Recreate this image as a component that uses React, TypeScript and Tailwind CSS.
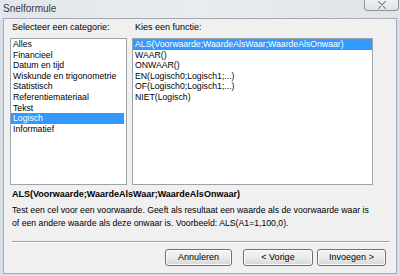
// Snelformule dialog (Windows 7 style "insert function" picker)

const categories = [
  "Alles",
  "Financieel",
  "Datum en tijd",
  "Wiskunde en trigonometrie",
  "Statistisch",
  "Referentiemateriaal",
  "Tekst",
  "Logisch",
  "Informatief",
];

const functions = [
  "ALS(Voorwaarde;WaardeAlsWaar;WaardeAlsOnwaar)",
  "WAAR()",
  "ONWAAR()",
  "EN(Logisch0;Logisch1;...)",
  "OF(Logisch0;Logisch1;...)",
  "NIET(Logisch)",
];

function ListBox({ items, selected, inset }: { items: string[]; selected: number; inset: string }) {
  return (
    <div className="h-[147px] border border-[#9da3aa] bg-white pt-0 overflow-hidden">
      {items.map((item, i) => (
        <div
          key={item}
          className={
            i === selected
              ? `h-[10.6px] leading-[10.6px] px-[2px] bg-[#3399ff] text-white whitespace-nowrap ${inset}`
              : "h-[10.6px] leading-[10.6px] px-[2px] text-black whitespace-nowrap"
          }
        >
          {item}
        </div>
      ))}
    </div>
  );
}

function Button({ label, width }: { label: string; width: string }) {
  return (
    <div
      className={`${width} h-[17px] flex items-center justify-center rounded-[3px] border border-[#707070] bg-gradient-to-b from-[#f4f4f4] via-[#ebebeb] to-[#d6d6d6] text-[9px] text-black shadow-[inset_0_0_0_1px_#fcfcfc]`}
    >
      {label}
    </div>
  );
}

export default function App() {
  return (
    <div className="w-[400px] h-[276px] overflow-hidden relative bg-[#d8dfe6] font-['Liberation_Sans',Arial,sans-serif]">
      {/* Aero glass title bar */}
      <div className="h-[18px] flex items-center pl-[3px] bg-gradient-to-r from-[#e2e6ea] via-[#e9ecef] to-[#dfe4e9]">
        <span className="text-[10px] text-[#3a3a3a] leading-none">Snelformule</span>
      </div>
      <div className="absolute top-0 right-[1px] w-[35px] h-[11px] rounded-b-[4px] border border-t-0 border-[#8b949d] bg-gradient-to-b from-[#eef1f4] to-[#dde2e7] flex items-center justify-center">
        <svg width="10" height="8" viewBox="0 0 10 8">
          <path d="M1.5 0.5 L8.5 7.5 M8.5 0.5 L1.5 7.5" stroke="#ffffff" strokeWidth="3" strokeLinecap="round" />
          <path d="M1.5 0.5 L8.5 7.5 M8.5 0.5 L1.5 7.5" stroke="#7d858d" strokeWidth="1.3" strokeLinecap="round" />
        </svg>
      </div>

      {/* Client area */}
      <div className="ml-[3px] w-[394px] h-[256px] border border-[#a3acb5] bg-[#f0f0f0] pl-[6px] text-[8.7px] text-black">
        <div className="grid grid-cols-[117px_241px] gap-x-[5px] pt-[2px]">
          <div className="h-[12px] leading-[12px] pl-[2px] text-[9px]">Selecteer een categorie:</div>
          <div className="h-[12px] leading-[12px] pl-[3px] text-[9px]">Kies een functie:</div>
          <div className="mt-[5px]">
            <ListBox items={categories} selected={7} inset="mr-[2px]" />
          </div>
          <div className="mt-[5px]">
            <ListBox items={functions} selected={0} inset="" />
          </div>
        </div>

        <div className="mt-[3px] h-[12px] leading-[12px] pl-[2px] text-[9px] font-bold">
          ALS(Voorwaarde;WaardeAlsWaar;WaardeAlsOnwaar)
        </div>
        <div className="mt-[4px] leading-[13px] pl-[2px] text-[8.7px]">
          Test een cel voor een voorwaarde. Geeft als resultaat een waarde als de voorwaarde waar is
          <br />
          of een andere waarde als deze onwaar is. Voorbeeld: ALS(A1=1,100,0).
        </div>

        <div className="mt-[11px] ml-[2px] w-[378px] h-px bg-[#a0a0a0]" />
        <div className="ml-[2px] w-[378px] h-px bg-white" />

        <div className="mt-[6px] flex justify-end pr-[10px]">
          <Button label="Annuleren" width="w-[67px]" />
          <div className="w-[11px]" />
          <Button label="< Vorige" width="w-[70px]" />
          <div className="w-[4px]" />
          <Button label="Invoegen >" width="w-[69px]" />
        </div>
      </div>
    </div>
  );
}
